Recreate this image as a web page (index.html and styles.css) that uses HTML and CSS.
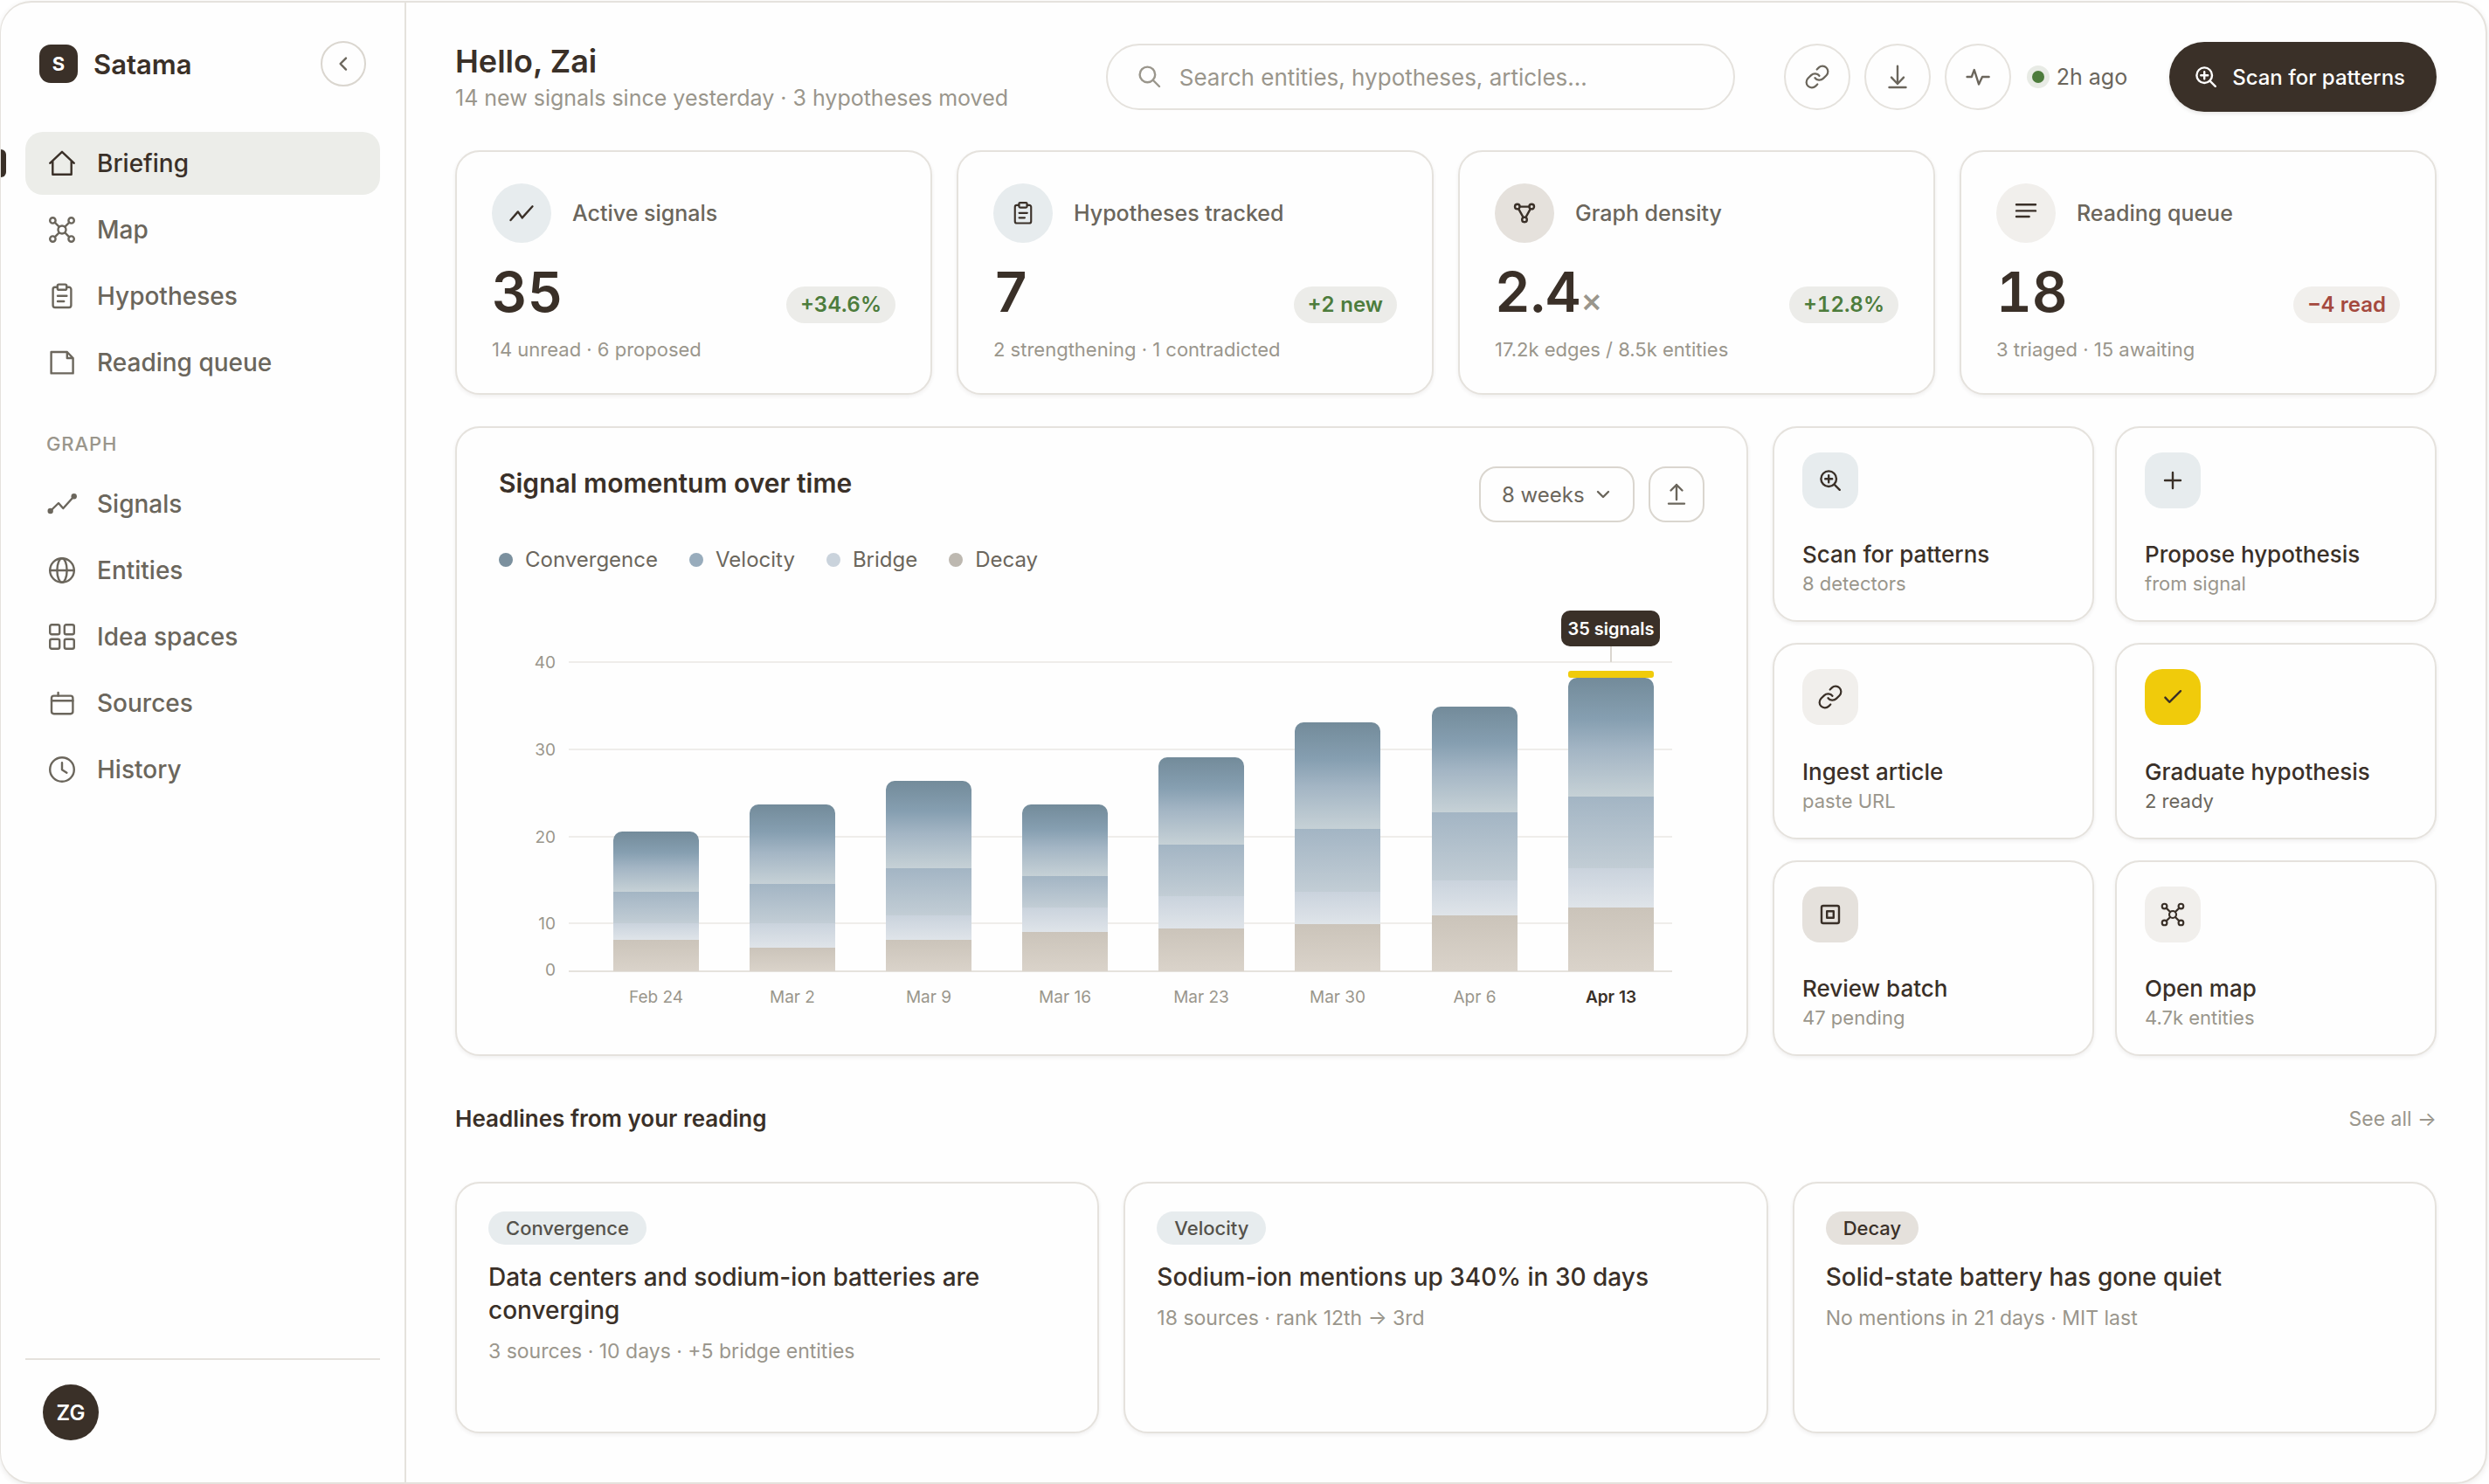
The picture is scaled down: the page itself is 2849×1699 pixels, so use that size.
FILE: index.html
```html
<!DOCTYPE html>
<html lang="en">
<head>
<meta charset="utf-8">
<meta name="viewport" content="width=device-width, initial-scale=1">
<title>Satama · Briefing</title>
<link rel="stylesheet" href="styles.css">
</head>
<body>
<svg class="sprite" aria-hidden="true">
  <symbol id="i-home" viewBox="0 0 36 36"><path d="M4.2 17.8 18 4.8l13.8 13M7.3 15.5v15.2h21.4V15.5"/></symbol>
  <symbol id="i-map" viewBox="0 0 36 36"><circle cx="18" cy="18" r="4.5"/><circle cx="7.4" cy="7.4" r="3.2"/><circle cx="28.6" cy="7.4" r="3.2"/><circle cx="7.4" cy="28.6" r="3.2"/><circle cx="28.6" cy="28.6" r="3.2"/><path d="m9.7 9.7 5 5M26.3 9.7l-5 5M9.7 26.3l5-5M26.3 26.3l-5-5"/></symbol>
  <symbol id="i-clip" viewBox="0 0 36 36"><path d="M12.8 7.8H10a2.4 2.4 0 0 0-2.4 2.4v18.4A2.4 2.4 0 0 0 10 31h16a2.4 2.4 0 0 0 2.4-2.4V10.2A2.4 2.4 0 0 0 26 7.8h-2.8"/><rect x="12.8" y="4.6" width="10.4" height="6.2" rx="1.6"/><path d="M13 17.8h10.4M13 24h7.2"/></symbol>
  <symbol id="i-page" viewBox="0 0 36 36"><path d="M5.6 6h18.2l6.8 7v17.4h-25zM23.8 6v7h6.8"/></symbol>
  <symbol id="i-signals" viewBox="0 0 36 36"><path d="M4.7 26 14 17l5.3 6L31.7 9.3"/><circle class="dot" cx="4.7" cy="26" r="3.2"/><circle class="dot" cx="31.7" cy="9.3" r="3.2"/></symbol>
  <symbol id="i-globe" viewBox="0 0 36 36"><circle cx="18" cy="18" r="13.8"/><ellipse cx="18" cy="18" rx="5.6" ry="13.8"/><path d="M4.2 18h27.6"/></symbol>
  <symbol id="i-grid" viewBox="0 0 36 36"><rect x="4.2" y="4.2" width="11" height="11" rx="2"/><rect x="20.8" y="4.2" width="11" height="11" rx="2"/><rect x="4.2" y="20.8" width="11" height="11" rx="2"/><rect x="20.8" y="20.8" width="11" height="11" rx="2"/></symbol>
  <symbol id="i-source" viewBox="0 0 36 36"><rect x="6" y="9.6" width="24.4" height="20.6" rx="2.6"/><path d="M6 15.2h24.4M13.6 6v3.6"/></symbol>
  <symbol id="i-clock" viewBox="0 0 36 36"><circle cx="18" cy="18" r="13.8"/><path d="M18 10.3v8l5.4 3.4"/></symbol>
  <symbol id="i-left" viewBox="0 0 36 36"><path d="m21 11.6-6.4 6.4 6.4 6.6"/></symbol>
  <symbol id="i-down" viewBox="0 0 36 36"><path d="m12 15 6 6 6-6"/></symbol>
  <symbol id="i-search" viewBox="0 0 36 36"><circle cx="15.4" cy="15.4" r="8.8"/><path d="m22 22 7 7"/></symbol>
  <symbol id="i-scan" viewBox="0 0 36 36"><circle cx="16.2" cy="16.2" r="8.8"/><path d="m22.8 22.8 6 6M16.2 12.2v8M12.2 16.2h8"/></symbol>
  <symbol id="i-link" viewBox="-2.5 -2.5 29 29"><path d="M10 13a5 5 0 0 0 7.54.54l3-3a5 5 0 0 0-7.07-7.07l-1.72 1.71"/><path d="M14 11a5 5 0 0 0-7.54-.54l-3 3a5 5 0 0 0 7.07 7.07l1.71-1.71"/></symbol>
  <symbol id="i-download" viewBox="0 0 36 36"><path d="M18 5.6V26M11 18.6l7 7.4 7-7.4M8.5 30h19"/></symbol>
  <symbol id="i-export" viewBox="0 0 36 36"><path d="M18 7v17M11.5 13.5 18 7l6.5 6.5M9 28.6h18"/></symbol>
  <symbol id="i-pulse" viewBox="0 0 36 36"><path d="M5.6 18h5.2l3-8L19 26.4l4-8.4h7.6"/></symbol>
  <symbol id="i-trend" viewBox="0 0 36 36"><path d="m5.5 26 8.4-9.6 4.8 7L30.5 10.3"/></symbol>
  <symbol id="i-graph" viewBox="0 0 36 36"><circle cx="9.8" cy="10.6" r="2.8"/><circle cx="26.2" cy="10.6" r="2.8"/><circle cx="18" cy="25.4" r="2.8"/><path d="M12.6 10.6h10.8M11.2 13.1l5.4 9.8M24.8 13.1l-5.4 9.8"/></symbol>
  <symbol id="i-lines" viewBox="0 0 36 36"><path d="M7 8.2h22M7 15.4h22M7 22h14.6"/></symbol>
  <symbol id="i-plus" viewBox="0 0 36 36"><path d="M18 9v18M9 18h18"/></symbol>
  <symbol id="i-check" viewBox="0 0 36 36"><path d="m9.4 18.6 4.8 5.2L27 11.2"/></symbol>
  <symbol id="i-batch" viewBox="0 0 36 36"><rect x="8" y="8" width="20" height="20" rx="2"/><rect x="14.2" y="14.2" width="7.6" height="7.6"/></symbol>
</svg>

<div class="app">
  <aside class="sidebar">
    <div class="brand">
      <span class="brand-mark">S</span>
      <span class="brand-name">Satama</span>
      <button class="collapse" type="button" aria-label="Collapse sidebar"><svg class="icon"><use href="#i-left"/></svg></button>
    </div>
    <nav class="nav" aria-label="Main">
      <a class="nav-item active" href="#briefing" aria-current="page"><svg class="icon"><use href="#i-home"/></svg>Briefing</a>
      <a class="nav-item" href="#map"><svg class="icon"><use href="#i-map"/></svg>Map</a>
      <a class="nav-item" href="#hypotheses"><svg class="icon"><use href="#i-clip"/></svg>Hypotheses</a>
      <a class="nav-item" href="#queue"><svg class="icon"><use href="#i-page"/></svg>Reading queue</a>
    </nav>
    <h2 class="nav-label">GRAPH</h2>
    <nav class="nav" aria-label="Graph">
      <a class="nav-item" href="#signals"><svg class="icon"><use href="#i-signals"/></svg>Signals</a>
      <a class="nav-item" href="#entities"><svg class="icon"><use href="#i-globe"/></svg>Entities</a>
      <a class="nav-item" href="#spaces"><svg class="icon"><use href="#i-grid"/></svg>Idea spaces</a>
      <a class="nav-item" href="#sources"><svg class="icon"><use href="#i-source"/></svg>Sources</a>
      <a class="nav-item" href="#history"><svg class="icon"><use href="#i-clock"/></svg>History</a>
    </nav>
    <div class="sidebar-foot"><span class="avatar">ZG</span></div>
  </aside>

  <main class="main">
    <header class="topbar">
      <div class="greeting">
        <h1>Hello, Zai</h1>
        <p>14 new signals since yesterday · 3 hypotheses moved</p>
      </div>
      <label class="search">
        <svg class="icon"><use href="#i-search"/></svg>
        <input type="search" placeholder="Search entities, hypotheses, articles..." aria-label="Search">
      </label>
      <div class="tools">
        <button class="round" type="button" aria-label="Copy link"><svg class="icon"><use href="#i-link"/></svg></button>
        <button class="round" type="button" aria-label="Download"><svg class="icon"><use href="#i-download"/></svg></button>
        <button class="round" type="button" aria-label="Activity"><svg class="icon"><use href="#i-pulse"/></svg></button>
        <span class="status"><span class="status-dot"></span>2h ago</span>
      </div>
      <button class="primary" type="button"><svg class="icon"><use href="#i-scan"/></svg>Scan for patterns</button>
    </header>

    <section class="kpis" aria-label="Key figures">
      <article class="card kpi">
        <div class="kpi-head"><span class="kpi-icon blue"><svg class="icon"><use href="#i-trend"/></svg></span><h2>Active signals</h2></div>
        <div class="kpi-row"><strong class="kpi-value">35</strong><span class="delta up">+34.6%</span></div>
        <p class="kpi-note">14 unread · 6 proposed</p>
      </article>
      <article class="card kpi">
        <div class="kpi-head"><span class="kpi-icon blue"><svg class="icon small"><use href="#i-clip"/></svg></span><h2>Hypotheses tracked</h2></div>
        <div class="kpi-row"><strong class="kpi-value">7</strong><span class="delta up">+2 new</span></div>
        <p class="kpi-note">2 strengthening · 1 contradicted</p>
      </article>
      <article class="card kpi">
        <div class="kpi-head"><span class="kpi-icon stone"><svg class="icon"><use href="#i-graph"/></svg></span><h2>Graph density</h2></div>
        <div class="kpi-row"><strong class="kpi-value">2.4<span class="unit">×</span></strong><span class="delta up">+12.8%</span></div>
        <p class="kpi-note">17.2k edges / 8.5k entities</p>
      </article>
      <article class="card kpi">
        <div class="kpi-head"><span class="kpi-icon sand"><svg class="icon"><use href="#i-lines"/></svg></span><h2>Reading queue</h2></div>
        <div class="kpi-row"><strong class="kpi-value">18</strong><span class="delta down">−4 read</span></div>
        <p class="kpi-note">3 triaged · 15 awaiting</p>
      </article>
    </section>

    <div class="middle">
      <section class="card chart-card">
        <div class="chart-head">
          <h2>Signal momentum over time</h2>
          <div class="range">
            <select aria-label="Period"><option>8 weeks</option><option>12 weeks</option></select>
            <svg class="icon"><use href="#i-down"/></svg>
          </div>
          <button class="square" type="button" aria-label="Export chart"><svg class="icon"><use href="#i-export"/></svg></button>
        </div>
        <ul class="legend">
          <li><span class="key k1"></span>Convergence</li>
          <li><span class="key k2"></span>Velocity</li>
          <li><span class="key k3"></span>Bridge</li>
          <li><span class="key k4"></span>Decay</li>
        </ul>
        <svg class="chart" viewBox="0 -1 1380 479" role="img" aria-label="Signals per week, 24 February to 13 April">
          <defs>
            <linearGradient id="g1" x2="0" y2="1"><stop offset="0" stop-color="#738b9a"/><stop offset=".35" stop-color="#869fb1"/><stop offset=".6" stop-color="#a3b5c4"/><stop offset="1" stop-color="#c6d1d6"/></linearGradient>
            <linearGradient id="g2" x2="0" y2="1"><stop offset="0" stop-color="#a3b5c4"/><stop offset="1" stop-color="#c2cdd5"/></linearGradient>
            <linearGradient id="g3" x2="0" y2="1"><stop offset="0" stop-color="#cad3dd"/><stop offset="1" stop-color="#dfe4e9"/></linearGradient>
            <linearGradient id="g4" x2="0" y2="1"><stop offset="0" stop-color="#cbc4ba"/><stop offset="1" stop-color="#dad3ca"/></linearGradient>
          </defs>
          <path class="gridline" d="M80 77h1263M80 177h1263M80 277h1263M80 376h1263"/>
          <path class="baseline" d="M80 431h1263"/>
          <g class="y-labels"><text x="65" y="84">40</text><text x="65" y="184">30</text><text x="65" y="284">20</text><text x="65" y="383">10</text><text x="65" y="436">0</text></g>
          <g id="bars">
            <path fill="url(#g1)" d="M131 340v-59a10 10 0 0 1 10-10h78a10 10 0 0 1 10 10v59z"/><path fill="url(#g2)" d="M131 340h98v36h-98z"/><path fill="url(#g3)" d="M131 376h98v19h-98z"/><path fill="url(#g4)" d="M131 395h98v36h-98z"/>
            <path fill="url(#g1)" d="M287 331v-81a10 10 0 0 1 10-10h78a10 10 0 0 1 10 10v81z"/><path fill="url(#g2)" d="M287 331h98v45h-98z"/><path fill="url(#g3)" d="M287 376h98v28h-98z"/><path fill="url(#g4)" d="M287 404h98v27h-98z"/>
            <path fill="url(#g1)" d="M443 313v-90a10 10 0 0 1 10-10h78a10 10 0 0 1 10 10v90z"/><path fill="url(#g2)" d="M443 313h98v54h-98z"/><path fill="url(#g3)" d="M443 367h98v28h-98z"/><path fill="url(#g4)" d="M443 395h98v36h-98z"/>
            <path fill="url(#g1)" d="M599 322v-72a10 10 0 0 1 10-10h78a10 10 0 0 1 10 10v72z"/><path fill="url(#g2)" d="M599 322h98v36h-98z"/><path fill="url(#g3)" d="M599 358h98v28h-98z"/><path fill="url(#g4)" d="M599 386h98v45h-98z"/>
            <path fill="url(#g1)" d="M755 286v-90a10 10 0 0 1 10-10h78a10 10 0 0 1 10 10v90z"/><path fill="url(#g2)" d="M755 286h98v59h-98z"/><path fill="url(#g3)" d="M755 345h98v37h-98z"/><path fill="url(#g4)" d="M755 382h98v49h-98z"/>
            <path fill="url(#g1)" d="M911 268V156a10 10 0 0 1 10-10h78a10 10 0 0 1 10 10v112z"/><path fill="url(#g2)" d="M911 268h98v72h-98z"/><path fill="url(#g3)" d="M911 340h98v37h-98z"/><path fill="url(#g4)" d="M911 377h98v54h-98z"/>
            <path fill="url(#g1)" d="M1068 249V138a10 10 0 0 1 10-10h78a10 10 0 0 1 10 10v111z"/><path fill="url(#g2)" d="M1068 249h98v78h-98z"/><path fill="url(#g3)" d="M1068 327h98v40h-98z"/><path fill="url(#g4)" d="M1068 367h98v64h-98z"/>
            <path fill="url(#g1)" d="M1224 231V105a10 10 0 0 1 10-10h78a10 10 0 0 1 10 10v126z"/><path fill="url(#g2)" d="M1224 231h98v82h-98z"/><path fill="url(#g3)" d="M1224 313h98v45h-98z"/><path fill="url(#g4)" d="M1224 358h98v73h-98z"/>
          </g>
          <rect class="peak" x="1224" y="87" width="98" height="8" rx="3"/>
          <path class="stem" d="M1273 59v18"/>
          <rect class="tip" x="1216" y="18" width="113" height="41" rx="10"/>
          <text class="tip-text" x="1273" y="46">35 signals</text>
          <g class="x-labels"><text x="180" y="467">Feb 24</text><text x="336" y="467">Mar 2</text><text x="492" y="467">Mar 9</text><text x="648" y="467">Mar 16</text><text x="804" y="467">Mar 23</text><text x="960" y="467">Mar 30</text><text x="1117" y="467">Apr 6</text><text class="now" x="1273" y="467">Apr 13</text></g>
        </svg>
      </section>

      <section class="actions" aria-label="Quick actions">
        <button class="card action" type="button"><span class="tile blue"><svg class="icon"><use href="#i-scan"/></svg></span><span class="action-title">Scan for patterns</span><span class="action-note">8 detectors</span></button>
        <button class="card action" type="button"><span class="tile blue"><svg class="icon"><use href="#i-plus"/></svg></span><span class="action-title">Propose hypothesis</span><span class="action-note">from signal</span></button>
        <button class="card action" type="button"><span class="tile sand"><svg class="icon"><use href="#i-link"/></svg></span><span class="action-title">Ingest article</span><span class="action-note">paste URL</span></button>
        <button class="card action" type="button"><span class="tile yellow"><svg class="icon"><use href="#i-check"/></svg></span><span class="action-title">Graduate hypothesis</span><span class="action-note strong">2 ready</span></button>
        <button class="card action" type="button"><span class="tile stone"><svg class="icon"><use href="#i-batch"/></svg></span><span class="action-title">Review batch</span><span class="action-note">47 pending</span></button>
        <button class="card action" type="button"><span class="tile sand"><svg class="icon small"><use href="#i-map"/></svg></span><span class="action-title">Open map</span><span class="action-note">4.7k entities</span></button>
      </section>
    </div>

    <div class="section-head">
      <h2>Headlines from your reading</h2>
      <a href="#headlines">See all →</a>
    </div>
    <section class="headlines">
      <article class="card headline">
        <span class="tag blue">Convergence</span>
        <h3>Data centers and sodium-ion batteries are converging</h3>
        <p>3 sources · 10 days · +5 bridge entities</p>
      </article>
      <article class="card headline">
        <span class="tag blue">Velocity</span>
        <h3>Sodium-ion mentions up 340% in 30 days</h3>
        <p>18 sources · rank 12th → 3rd</p>
      </article>
      <article class="card headline">
        <span class="tag stone">Decay</span>
        <h3>Solid-state battery has gone quiet</h3>
        <p>No mentions in 21 days · MIT last</p>
      </article>
    </section>
  </main>
</div>
</body>
</html>
```
FILE: styles.css
```css
:root {
  --ink: #3a3028;
  --text: #6b665c;
  --muted: #9a968c;
  --line: #e5e2dd;
  --line-strong: #dad6cf;
  --surface: #fefefe;
  --blue: #e7ecee;
  --sand: #f1efec;
  --stone: #e5e1dc;
  --yellow: #f0cb0b;
  --green: #4d7c3c;
  --red: #a4493e;
}

* { box-sizing: border-box; }

body {
  margin: 0;
  background: #fff;
  color: var(--ink);
  font-family: Inter, "Liberation Sans", sans-serif;
  font-size: 26px;
}

h1, h2, h3, p, ul { margin: 0; padding: 0; }
button, input, select { font: inherit; color: inherit; }
button { cursor: pointer; }
a { color: inherit; text-decoration: none; }

.sprite { display: none; }

.icon {
  flex: none;
  width: 36px;
  height: 36px;
  fill: none;
  stroke: currentColor;
  stroke-width: 2.4;
  stroke-linecap: round;
  stroke-linejoin: round;
}
.icon.small { width: 32px; height: 32px; }
.dot { fill: currentColor; stroke: none; }
#i-link { stroke-width: 1.8; }

.app {
  display: flex;
  min-height: calc(100vh - 1px);
  margin: 1px 2px 0 0;
  border: 2px solid var(--line);
  border-left-width: 1px;
  border-radius: 36px;
  background: var(--surface);
  box-shadow: 0 2px 6px rgba(58, 48, 40, .1);
}

/* Sidebar */
.sidebar {
  flex: none;
  display: flex;
  flex-direction: column;
  width: 464px;
  padding: 44px 28px 48px;
  border-right: 2px solid var(--line);
}
.brand {
  display: flex;
  align-items: center;
  gap: 18px;
  margin-bottom: 52px;
  padding: 0 16px;
}
.brand-mark {
  display: grid;
  place-items: center;
  width: 44px;
  height: 44px;
  border-radius: 13px;
  background: var(--ink);
  color: #fff;
  font-size: 22px;
  font-weight: 700;
}
.brand-name { flex: 1; font-size: 31px; font-weight: 600; }
.collapse {
  display: grid;
  place-items: center;
  width: 52px;
  height: 52px;
  padding: 0;
  border: 2px solid var(--line-strong);
  border-radius: 50%;
  background: none;
  color: var(--text);
}
.nav { display: flex; flex-direction: column; gap: 4px; }
.nav-item {
  position: relative;
  display: flex;
  align-items: center;
  gap: 22px;
  height: 72px;
  padding: 0 24px;
  border-radius: 20px;
  color: var(--text);
  font-size: 28px;
  font-weight: 500;
}
.nav-item.active { background: #ecede9; color: var(--ink); }
.nav-item.active::before {
  content: "";
  position: absolute;
  left: -28px;
  top: 20px;
  width: 6px;
  height: 32px;
  border-radius: 0 6px 6px 0;
  background: var(--ink);
}
.nav-label {
  margin: 42px 24px 18px;
  color: var(--muted);
  font-size: 22px;
  font-weight: 500;
  line-height: 30px;
  letter-spacing: .04em;
}
.sidebar-foot {
  margin-top: auto;
  padding: 28px 20px 0;
  border-top: 2px solid var(--line);
}
.avatar {
  display: grid;
  place-items: center;
  width: 64px;
  height: 64px;
  border-radius: 50%;
  background: var(--ink);
  color: #fff;
  font-size: 24px;
  font-weight: 600;
}

/* Main column */
.main {
  flex: 1;
  min-width: 0;
  display: flex;
  flex-direction: column;
  padding: 43px 56px 56px;
}

.topbar { display: flex; align-items: center; margin-bottom: 42px; }
.greeting { flex: 1; }
.greeting h1 { font-size: 36px; font-weight: 600; line-height: 48px; }
.greeting p { color: var(--muted); font-size: 25px; line-height: 36px; }
.search {
  flex: 0 1 720px;
  display: flex;
  align-items: center;
  gap: 16px;
  height: 76px;
  margin-right: 56px;
  padding: 0 30px;
  border: 2px solid var(--line);
  border-radius: 38px;
  color: var(--muted);
}
.search input {
  flex: 1;
  min-width: 0;
  padding: 0;
  border: 0;
  outline: 0;
  background: none;
}
.search input::placeholder { color: var(--muted); opacity: 1; }
.tools { display: flex; align-items: center; gap: 16px; margin-right: 48px; color: var(--text); }
.round {
  display: grid;
  place-items: center;
  width: 76px;
  height: 76px;
  padding: 0;
  border: 2px solid var(--line);
  border-radius: 50%;
  background: none;
}
.status { display: flex; align-items: center; gap: 14px; padding-left: 8px; font-size: 25px; white-space: nowrap; }
.status-dot {
  width: 14px;
  height: 14px;
  border-radius: 50%;
  background: var(--green);
  box-shadow: 0 0 0 6px #e8ebe5;
}
.primary {
  display: flex;
  align-items: center;
  gap: 12px;
  height: 80px;
  padding: 0 36px 0 24px;
  border: 0;
  border-radius: 40px;
  background: var(--ink);
  color: #fff;
  font-size: 24px;
  font-weight: 500;
  white-space: nowrap;
  box-shadow: 0 2px 4px rgba(58, 48, 40, .12);
}

.card {
  border: 2px solid var(--line);
  border-radius: 28px;
  background: var(--surface);
  box-shadow: 0 2px 4px rgba(58, 48, 40, .07);
}
.blue { background: var(--blue); }
.sand { background: var(--sand); }
.stone { background: var(--stone); }
.yellow { background: var(--yellow); }

/* Key figures */
.kpis {
  display: grid;
  grid-template-columns: repeat(4, minmax(0, 1fr));
  gap: 28px;
  margin-bottom: 36px;
}
.kpi { padding: 36px 40px; }
.kpi-head { display: flex; align-items: center; gap: 24px; margin-bottom: 24px; }
.kpi-head h2 { color: var(--text); font-size: 25px; font-weight: 500; }
.kpi-icon {
  display: grid;
  place-items: center;
  width: 68px;
  height: 68px;
  border-radius: 50%;
}
.kpi-row {
  display: flex;
  align-items: baseline;
  justify-content: space-between;
  font-variant-numeric: tabular-nums;
}
.kpi-value { font-size: 63px; font-weight: 600; line-height: 64px; }
.unit { color: var(--muted); font-size: 38px; font-weight: 500; line-height: 38px; }
.delta {
  padding: 0 16px;
  border-radius: 21px;
  background: #ecece9;
  font-size: 24px;
  font-weight: 600;
  line-height: 42px;
}
.up { color: var(--green); }
.down { background: #f1efec; color: var(--red); }
.kpi-note { margin-top: 16px; color: var(--muted); font-size: 22px; line-height: 28px; }

/* Chart and quick actions */
.middle {
  display: grid;
  grid-template-columns: minmax(0, 1fr) 760px;
  gap: 28px;
}
.chart-card { padding: 44px 48px 48px; }
.chart-head { display: flex; align-items: flex-start; gap: 16px; }
.chart-head h2 { flex: 1; font-size: 30px; font-weight: 600; line-height: 38px; }
.range { position: relative; color: var(--text); }
.range select {
  appearance: none;
  width: 178px;
  height: 64px;
  padding: 0 24px;
  border: 2px solid var(--line-strong);
  border-radius: 20px;
  background: none;
  font-size: 24px;
}
.range .icon { position: absolute; right: 18px; top: 14px; pointer-events: none; }
.square {
  display: grid;
  place-items: center;
  width: 64px;
  height: 64px;
  padding: 0;
  border: 2px solid var(--line-strong);
  border-radius: 20px;
  background: none;
  color: var(--text);
}
.legend {
  display: flex;
  gap: 36px;
  margin: 28px 0 24px;
  color: var(--text);
  font-size: 24px;
  line-height: 30px;
  list-style: none;
}
.legend li { display: flex; align-items: center; gap: 14px; }
.key { width: 16px; height: 16px; border-radius: 50%; }
.k1 { background: #7b909e; }
.k2 { background: #98acbc; }
.k3 { background: #cad3dc; }
.k4 { background: #bdb8b0; }

.chart { display: block; width: 100%; font-size: 19px; }
.gridline { stroke: #efedea; stroke-width: 2; }
.baseline { stroke: var(--line); stroke-width: 2; }
.y-labels, .x-labels { fill: var(--muted); }
.y-labels { text-anchor: end; }
.x-labels, .tip-text { text-anchor: middle; }
.now { fill: var(--ink); font-weight: 600; }
.peak { fill: var(--yellow); }
.stem { stroke: var(--line-strong); stroke-width: 2; }
.tip { fill: var(--ink); }
.tip-text { fill: #fff; font-size: 20px; font-weight: 600; }

.actions {
  display: grid;
  grid-template-columns: repeat(2, minmax(0, 1fr));
  grid-auto-rows: 1fr;
  gap: 24px;
}
.action {
  display: flex;
  flex-direction: column;
  align-items: flex-start;
  padding: 28px 32px;
  text-align: left;
}
.tile {
  display: grid;
  place-items: center;
  width: 64px;
  height: 64px;
  margin-bottom: auto;
  border-radius: 20px;
}
.action-title { font-size: 26px; font-weight: 500; line-height: 38px; }
.action-note { color: var(--muted); font-size: 22px; line-height: 28px; }
.action-note.strong { color: var(--text); }

/* Headlines */
.section-head {
  display: flex;
  align-items: center;
  justify-content: space-between;
  margin: 52px 0;
}
.section-head h2 { font-size: 26px; font-weight: 600; line-height: 40px; }
.section-head a { color: var(--muted); font-size: 23px; line-height: 40px; }
.headlines {
  flex: 1;
  display: grid;
  grid-template-columns: repeat(3, minmax(0, 1fr));
  gap: 28px;
}
.headline { padding: 32px 36px; }
.tag {
  display: inline-block;
  padding: 0 20px;
  border-radius: 19px;
  color: #55524b;
  font-size: 22px;
  font-weight: 500;
  line-height: 38px;
  vertical-align: top;
}
.tag.stone { color: var(--ink); }
.headline h3 { margin-top: 18px; font-size: 28px; font-weight: 500; line-height: 38px; }
.headline p { margin-top: 12px; color: var(--muted); font-size: 23px; line-height: 32px; }
```
